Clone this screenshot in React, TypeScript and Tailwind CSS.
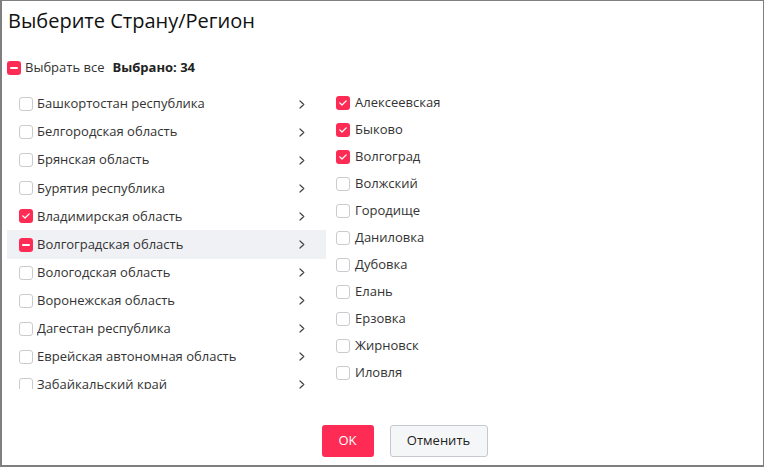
import React from "react";

const regions = [
  { name: "Башкортостан республика", state: "off" },
  { name: "Белгородская область", state: "off" },
  { name: "Брянская область", state: "off" },
  { name: "Бурятия республика", state: "off" },
  { name: "Владимирская область", state: "on" },
  { name: "Волгоградская область", state: "part" },
  { name: "Вологодская область", state: "off" },
  { name: "Воронежская область", state: "off" },
  { name: "Дагестан республика", state: "off" },
  { name: "Еврейская автономная область", state: "off" },
  { name: "Забайкальский край", state: "off" },
];

const cities = [
  { name: "Алексеевская", on: true },
  { name: "Быково", on: true },
  { name: "Волгоград", on: true },
  { name: "Волжский", on: false },
  { name: "Городище", on: false },
  { name: "Даниловка", on: false },
  { name: "Дубовка", on: false },
  { name: "Елань", on: false },
  { name: "Ерзовка", on: false },
  { name: "Жирновск", on: false },
  { name: "Иловля", on: false },
];

const Box = ({ state }: { state: string }) => {
  if (state === "off") {
    return <span className="w-[14px] h-[14px] shrink-0 rounded-[3px] border border-[#c9cbcf] bg-white" />;
  }
  return (
    <span className="w-[14px] h-[14px] shrink-0 rounded-[3px] bg-[#fe2c55] flex items-center justify-center">
      {state === "on" ? (
        <svg width="8" height="6" viewBox="0 0 8 6" fill="none">
          <path d="M0.8 2.9 L3 5 L7.2 0.9" stroke="white" strokeWidth="1.3" strokeLinecap="round" strokeLinejoin="round" />
        </svg>
      ) : (
        <span className="w-[8px] h-[2px] rounded-full bg-white" />
      )}
    </span>
  );
};

const Chevron = () => (
  <svg width="6" height="9" viewBox="0 0 6 9" fill="none" className="shrink-0">
    <path d="M1 1 L4.8 4.5 L1 8" stroke="#444" strokeWidth="1.2" strokeLinecap="round" strokeLinejoin="round" />
  </svg>
);

export default function App() {
  return (
    <div
      className="w-[764px] h-[467px] bg-white border-t border-r border-l-2 border-b-2 border-[#7f7f7f] flex flex-col text-[#333]"
      style={{ fontFamily: '"Open Sans", "Noto Sans", sans-serif' }}
    >
      <h1 className="pl-[6px] pt-[6px] text-[20px] leading-[28px] text-[#111]">Выберите Страну/Регион</h1>

      <div className="mt-[23px] pl-[5px] h-[20px] flex items-center text-[13px]">
        <Box state="part" />
        <span className="ml-[4px]">Выбрать все</span>
        <span className="ml-[8px] font-bold text-[#222]">Выбрано: 34</span>
      </div>

      <div className="mt-[12px] flex">
        <div className="ml-[5px] w-[319px] h-[299px] overflow-hidden">
          {regions.map((r) => (
            <div
              key={r.name}
              className={`h-[28.1px] flex items-center pl-[12px] pr-[21px] text-[13px] ${
                r.state === "part" ? "bg-[#f0f1f5]" : ""
              }`}
            >
              <Box state={r.state} />
              <span className="ml-[4px] flex-1 truncate">{r.name}</span>
              <Chevron />
            </div>
          ))}
        </div>

        <div className="ml-[10px] -mt-[1px] flex flex-col">
          {cities.map((c) => (
            <div key={c.name} className="h-[27px] flex items-center text-[13px]">
              <Box state={c.on ? "on" : "off"} />
              <span className="ml-[5px]">{c.name}</span>
            </div>
          ))}
        </div>
      </div>

      <div className="mt-auto mb-[8px] flex justify-center gap-[16px] pl-[44px]">
        <button className="w-[52px] h-[32px] rounded-[3px] bg-[#fe2c55] text-white text-[13px]">OK</button>
        <button className="w-[98px] h-[32px] rounded-[3px] bg-[#f5f6f8] border border-[#c5c9cf] text-[13px] text-[#222]">
          Отменить
        </button>
      </div>
    </div>
  );
}
